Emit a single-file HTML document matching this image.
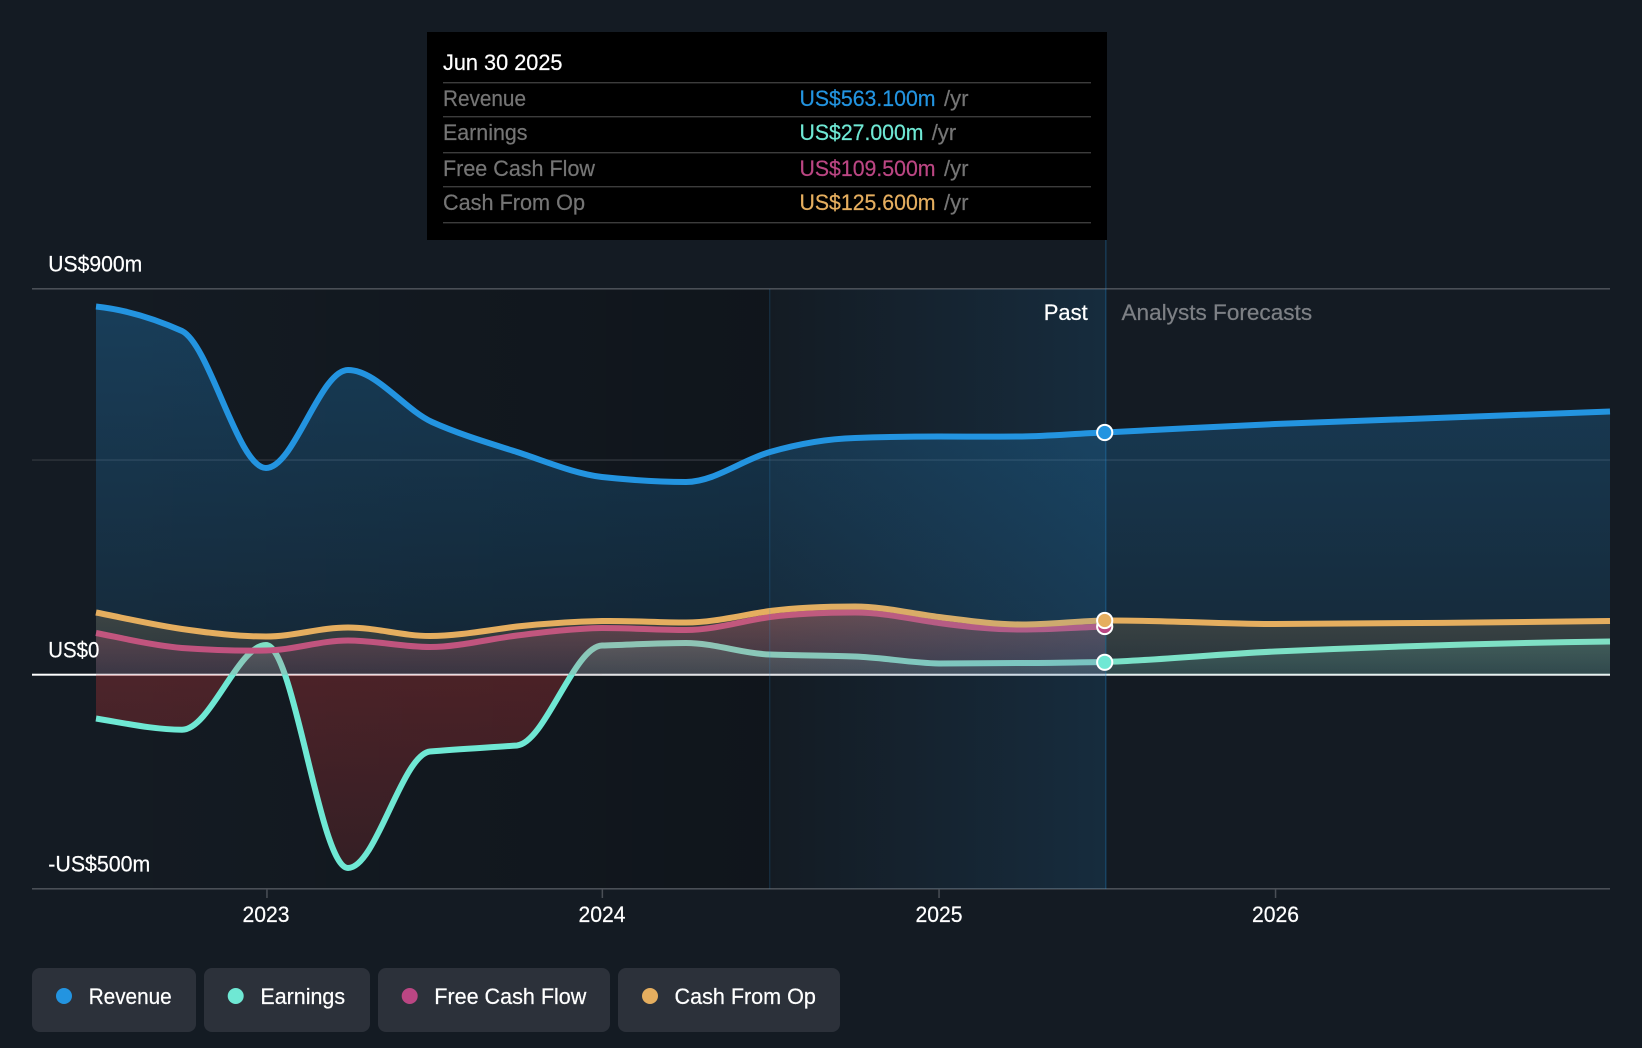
<!DOCTYPE html>
<html lang="en">
<head>
<meta charset="utf-8">
<title>Revenue and Earnings Chart</title>
<style>
html,body{margin:0;padding:0;background:#141b23;width:1642px;height:1048px;overflow:hidden}
svg{display:block}
text{font-family:"Liberation Sans",Arial,sans-serif;font-size:22px;fill:#fff;stroke:currentColor;stroke-width:.22px;color:#fff}
.l{fill:#757575;color:#757575}
</style>
</head>
<body>
<svg xmlns="http://www.w3.org/2000/svg" width="1642" height="1048" viewBox="0 0 1642 1048">
<defs>
<linearGradient id="gDark" gradientUnits="userSpaceOnUse" x1="96" y1="0" x2="769" y2="0"><stop offset="0" stop-color="#000" stop-opacity="0"/><stop offset="1" stop-color="#000" stop-opacity=".22"/></linearGradient>
<linearGradient id="gBand" gradientUnits="userSpaceOnUse" x1="769" y1="0" x2="1105" y2="0"><stop offset="0" stop-color="#2394e0" stop-opacity="0"/><stop offset="1" stop-color="#2394e0" stop-opacity=".14"/></linearGradient>
<linearGradient id="gRev" gradientUnits="userSpaceOnUse" x1="0" y1="300" x2="0" y2="675"><stop offset="0" stop-color="#2394e0" stop-opacity=".29"/><stop offset="1" stop-color="#2394e0" stop-opacity=".11"/></linearGradient>
<linearGradient id="gRed" gradientUnits="userSpaceOnUse" x1="0" y1="675" x2="0" y2="870"><stop offset="0" stop-color="#e63c3c" stop-opacity=".27"/><stop offset="1" stop-color="#e63c3c" stop-opacity=".16"/></linearGradient>
<linearGradient id="gTeal" gradientUnits="userSpaceOnUse" x1="0" y1="620" x2="0" y2="675"><stop offset="0" stop-color="#6fe8d4" stop-opacity=".24"/><stop offset="1" stop-color="#6fe8d4" stop-opacity=".12"/></linearGradient>
<linearGradient id="gPink" gradientUnits="userSpaceOnUse" x1="0" y1="610" x2="0" y2="675"><stop offset="0" stop-color="#d0466f" stop-opacity=".28"/><stop offset="1" stop-color="#bb4683" stop-opacity=".13"/></linearGradient>
<linearGradient id="gGold" gradientUnits="userSpaceOnUse" x1="0" y1="605" x2="0" y2="675"><stop offset="0" stop-color="#e5ae5f" stop-opacity=".2"/><stop offset="1" stop-color="#e5ae5f" stop-opacity=".08"/></linearGradient>
<clipPath id="above"><rect x="0" y="0" width="1642" height="674.7"/></clipPath>
<clipPath id="below"><rect x="0" y="674.7" width="1642" height="373"/></clipPath>
</defs>

<rect width="1642" height="1048" fill="#141b23"/>
<rect x="32" y="289" width="737" height="600" fill="url(#gDark)"/>

<!-- grid -->
<rect x="32" y="288" width="1578" height="1.6" fill="#4a4f56"/>
<rect x="32" y="459.3" width="1578" height="1.5" fill="#2e333a"/>
<rect x="32" y="673.7" width="1578" height="2" fill="#fff"/>
<rect x="32" y="888" width="1578" height="1.6" fill="#4a4f56"/>
<rect x="266.2" y="889" width="1.5" height="9" fill="#4a4f56"/>
<rect x="601.6" y="889" width="1.5" height="9" fill="#4a4f56"/>
<rect x="938.3" y="889" width="1.5" height="9" fill="#4a4f56"/>
<rect x="1274.8" y="889" width="1.5" height="9" fill="#4a4f56"/>

<!-- revenue -->
<path fill="url(#gRev)" d="M96,306.5 C124,309.5 154,318.4 182,331 C210,345 238,468 266,468 C294,468 320,370 348,370 C376,370 404,409 432,422 C460,434.6 489,443 517,452 C545,461 574,473.6 602,477 C630,480 658,482 686,482 C714,482 742,460 770,452 C798,444 827,438.8 855,438 C883,437 911,436.5 939,436.5 C967,436.5 994,436.8 1022,436.5 C1050,436 1077,433.5 1105,432.5 C1160,429.5 1220,426.5 1275,424 C1385,420 1500,415.5 1610,411.5 L1610,674.7 L96,674.7 Z"/>
<path fill="none" stroke="#2394e0" stroke-width="6" d="M96,306.5 C124,309.5 154,318.4 182,331 C210,345 238,468 266,468 C294,468 320,370 348,370 C376,370 404,409 432,422 C460,434.6 489,443 517,452 C545,461 574,473.6 602,477 C630,480 658,482 686,482 C714,482 742,460 770,452 C798,444 827,438.8 855,438 C883,437 911,436.5 939,436.5 C967,436.5 994,436.8 1022,436.5 C1050,436 1077,433.5 1105,432.5 C1160,429.5 1220,426.5 1275,424 C1385,420 1500,415.5 1610,411.5"/>

<!-- earnings -->
<path clip-path="url(#above)" fill="url(#gTeal)" d="M96,718.5 C124,723 154,729.7 182,729.7 C210,729.7 238,645 266,645 C294,645 320,868 348,868 C376,868 402,754.5 430,751.5 C458,749 489,747.5 517,745.5 C545,742.7 574,646.5 602,645.5 C630,644.7 658,643 686,643 C714,643 742,653.5 770,654.5 C798,655.5 827,655.5 855,656.5 C883,657.5 911,663 939,663.5 C967,663.5 994,663 1022,663 C1050,663 1077,662.3 1105,662 C1160,660 1220,654 1275,651.5 C1385,646.5 1500,643 1610,641.5 L1610,674.7 L96,674.7 Z"/>
<path clip-path="url(#below)" fill="url(#gRed)" d="M96,718.5 C124,723 154,729.7 182,729.7 C210,729.7 238,645 266,645 C294,645 320,868 348,868 C376,868 402,754.5 430,751.5 C458,749 489,747.5 517,745.5 C545,742.7 574,646.5 602,645.5 L602,674.7 L96,674.7 Z"/>
<path fill="none" stroke="#6fe8d4" stroke-width="6" d="M96,718.5 C124,723 154,729.7 182,729.7 C210,729.7 238,645 266,645 C294,645 320,868 348,868 C376,868 402,754.5 430,751.5 C458,749 489,747.5 517,745.5 C545,742.7 574,646.5 602,645.5 C630,644.7 658,643 686,643 C714,643 742,653.5 770,654.5 C798,655.5 827,655.5 855,656.5 C883,657.5 911,663 939,663.5 C967,663.5 994,663 1022,663 C1050,663 1077,662.3 1105,662 C1160,660 1220,654 1275,651.5 C1385,646.5 1500,643 1610,641.5"/>

<!-- free cash flow -->
<path fill="url(#gPink)" d="M96,633 C124,638.5 154,645.5 182,648 C210,650 238,651 266,650.5 C294,650 320,640.5 348,640.5 C376,640.5 402,647 430,647 C458,647 489,639 517,635.5 C545,632 574,628.5 602,628 C630,628 658,630 686,630 C714,630 742,621 770,617 C798,613.5 827,612.5 855,612.5 C883,612.5 911,619 939,623 C967,627 994,629.5 1022,629.5 C1050,629.5 1077,627.5 1105,626.5 L1105,674.7 L96,674.7 Z"/>
<path fill="none" stroke="#bb4683" stroke-width="6" d="M96,633 C124,638.5 154,645.5 182,648 C210,650 238,651 266,650.5 C294,650 320,640.5 348,640.5 C376,640.5 402,647 430,647 C458,647 489,639 517,635.5 C545,632 574,628.5 602,628 C630,628 658,630 686,630 C714,630 742,621 770,617 C798,613.5 827,612.5 855,612.5 C883,612.5 911,619 939,623 C967,627 994,629.5 1022,629.5 C1050,629.5 1077,627.5 1105,626.5"/>

<!-- cash from op -->
<path fill="url(#gGold)" d="M96,612.5 C124,618 154,625 182,629 C210,633 238,636.5 266,636.5 C294,636.5 320,627.5 348,627.5 C376,627.5 402,636 430,636 C458,636 489,630 517,626.5 C545,623.5 574,621.5 602,621 C630,620.5 658,622.5 686,622.5 C714,622.5 742,615 770,611 C798,607.5 827,606.5 855,606.5 C883,606.5 911,613.5 939,617 C967,620.5 994,624.5 1022,624.5 C1050,624.5 1077,621 1105,620.5 C1160,620 1220,624 1275,624 C1385,624 1500,622 1610,621 L1610,674.7 L96,674.7 Z"/>
<path fill="none" stroke="#e5ae5f" stroke-width="6" d="M96,612.5 C124,618 154,625 182,629 C210,633 238,636.5 266,636.5 C294,636.5 320,627.5 348,627.5 C376,627.5 402,636 430,636 C458,636 489,630 517,626.5 C545,623.5 574,621.5 602,621 C630,620.5 658,622.5 686,622.5 C714,622.5 742,615 770,611 C798,607.5 827,606.5 855,606.5 C883,606.5 911,613.5 939,617 C967,620.5 994,624.5 1022,624.5 C1050,624.5 1077,621 1105,620.5 C1160,620 1220,624 1275,624 C1385,624 1500,622 1610,621"/>

<!-- past band -->
<rect x="769" y="289" width="337" height="600" fill="url(#gBand)"/>
<rect x="769" y="289" width="1.4" height="600" fill="#2394e0" fill-opacity=".14"/>
<rect x="1105" y="240" width="1.6" height="649" fill="#2394e0" fill-opacity=".24"/>

<!-- dots -->
<circle cx="1104.7" cy="432.5" r="7.6" fill="#2394e0" stroke="#fff" stroke-width="2"/>
<circle cx="1104.7" cy="626.5" r="7.6" fill="#bb4683" stroke="#fff" stroke-width="2"/>
<circle cx="1104.7" cy="620.5" r="7.6" fill="#e5ae5f" stroke="#fff" stroke-width="2"/>
<circle cx="1104.7" cy="662.3" r="7.6" fill="#6fe8d4" stroke="#fff" stroke-width="2"/>

<!-- axis labels -->
<text x="48.3" y="271.7" textLength="94" lengthAdjust="spacingAndGlyphs">US$900m</text>
<text x="48.3" y="657.3" textLength="51" lengthAdjust="spacingAndGlyphs">US$0</text>
<text x="48.3" y="871.7" textLength="102" lengthAdjust="spacingAndGlyphs">-US$500m</text>
<text x="242.5" y="922" textLength="47" lengthAdjust="spacingAndGlyphs">2023</text>
<text x="578.5" y="922" textLength="47" lengthAdjust="spacingAndGlyphs">2024</text>
<text x="915.5" y="922" textLength="47" lengthAdjust="spacingAndGlyphs">2025</text>
<text x="1252" y="922" textLength="47" lengthAdjust="spacingAndGlyphs">2026</text>
<text x="1043.7" y="320" textLength="44" lengthAdjust="spacingAndGlyphs">Past</text>
<text x="1121.5" y="320" textLength="190.6" lengthAdjust="spacingAndGlyphs" style="fill:#7d8085;color:#7d8085">Analysts Forecasts</text>

<!-- tooltip -->
<rect x="427" y="32" width="680" height="208" fill="#000"/>
<text x="443" y="70" textLength="119.5" lengthAdjust="spacingAndGlyphs">Jun 30 2025</text>
<rect x="443" y="82" width="648" height="1.4" fill="#3c3c3c"/>
<rect x="443" y="116" width="648" height="1.4" fill="#3c3c3c"/>
<rect x="443" y="152" width="648" height="1.4" fill="#3c3c3c"/>
<rect x="443" y="186" width="648" height="1.4" fill="#3c3c3c"/>
<rect x="443" y="222" width="648" height="1.4" fill="#3c3c3c"/>
<text class="l" x="443" y="106" textLength="83" lengthAdjust="spacingAndGlyphs">Revenue</text>
<text x="799.5" y="106" textLength="136" lengthAdjust="spacingAndGlyphs" style="fill:#2394e0;color:#2394e0">US$563.100m</text>
<text class="l" x="944" y="106" textLength="24.5" lengthAdjust="spacingAndGlyphs">/yr</text>
<text class="l" x="443" y="140" textLength="84.5" lengthAdjust="spacingAndGlyphs">Earnings</text>
<text x="799.5" y="140" textLength="124" lengthAdjust="spacingAndGlyphs" style="fill:#6fe8d4;color:#6fe8d4">US$27.000m</text>
<text class="l" x="931.7" y="140" textLength="24.5" lengthAdjust="spacingAndGlyphs">/yr</text>
<text class="l" x="443" y="176" textLength="152" lengthAdjust="spacingAndGlyphs">Free Cash Flow</text>
<text x="799.5" y="176" textLength="136" lengthAdjust="spacingAndGlyphs" style="fill:#bb4683;color:#bb4683">US$109.500m</text>
<text class="l" x="944" y="176" textLength="24.5" lengthAdjust="spacingAndGlyphs">/yr</text>
<text class="l" x="443" y="210" textLength="142" lengthAdjust="spacingAndGlyphs">Cash From Op</text>
<text x="799.5" y="210" textLength="136" lengthAdjust="spacingAndGlyphs" style="fill:#e5ae5f;color:#e5ae5f">US$125.600m</text>
<text class="l" x="944" y="210" textLength="24.5" lengthAdjust="spacingAndGlyphs">/yr</text>

<!-- legend -->
<rect x="32" y="968" width="164" height="64" rx="8" fill="#2c313a"/>
<rect x="204" y="968" width="166" height="64" rx="8" fill="#2c313a"/>
<rect x="378" y="968" width="232" height="64" rx="8" fill="#2c313a"/>
<rect x="618" y="968" width="222" height="64" rx="8" fill="#2c313a"/>
<circle cx="64" cy="996" r="8" fill="#2394e0"/>
<circle cx="235.7" cy="996" r="8" fill="#6fe8d4"/>
<circle cx="409.7" cy="996" r="8" fill="#bb4683"/>
<circle cx="650" cy="996" r="8" fill="#e5ae5f"/>
<text x="88.7" y="1004" textLength="83" lengthAdjust="spacingAndGlyphs">Revenue</text>
<text x="260.4" y="1004" textLength="84.7" lengthAdjust="spacingAndGlyphs">Earnings</text>
<text x="434.3" y="1004" textLength="152" lengthAdjust="spacingAndGlyphs">Free Cash Flow</text>
<text x="674.5" y="1004" textLength="141.4" lengthAdjust="spacingAndGlyphs">Cash From Op</text>
</svg>
</body>
</html>
